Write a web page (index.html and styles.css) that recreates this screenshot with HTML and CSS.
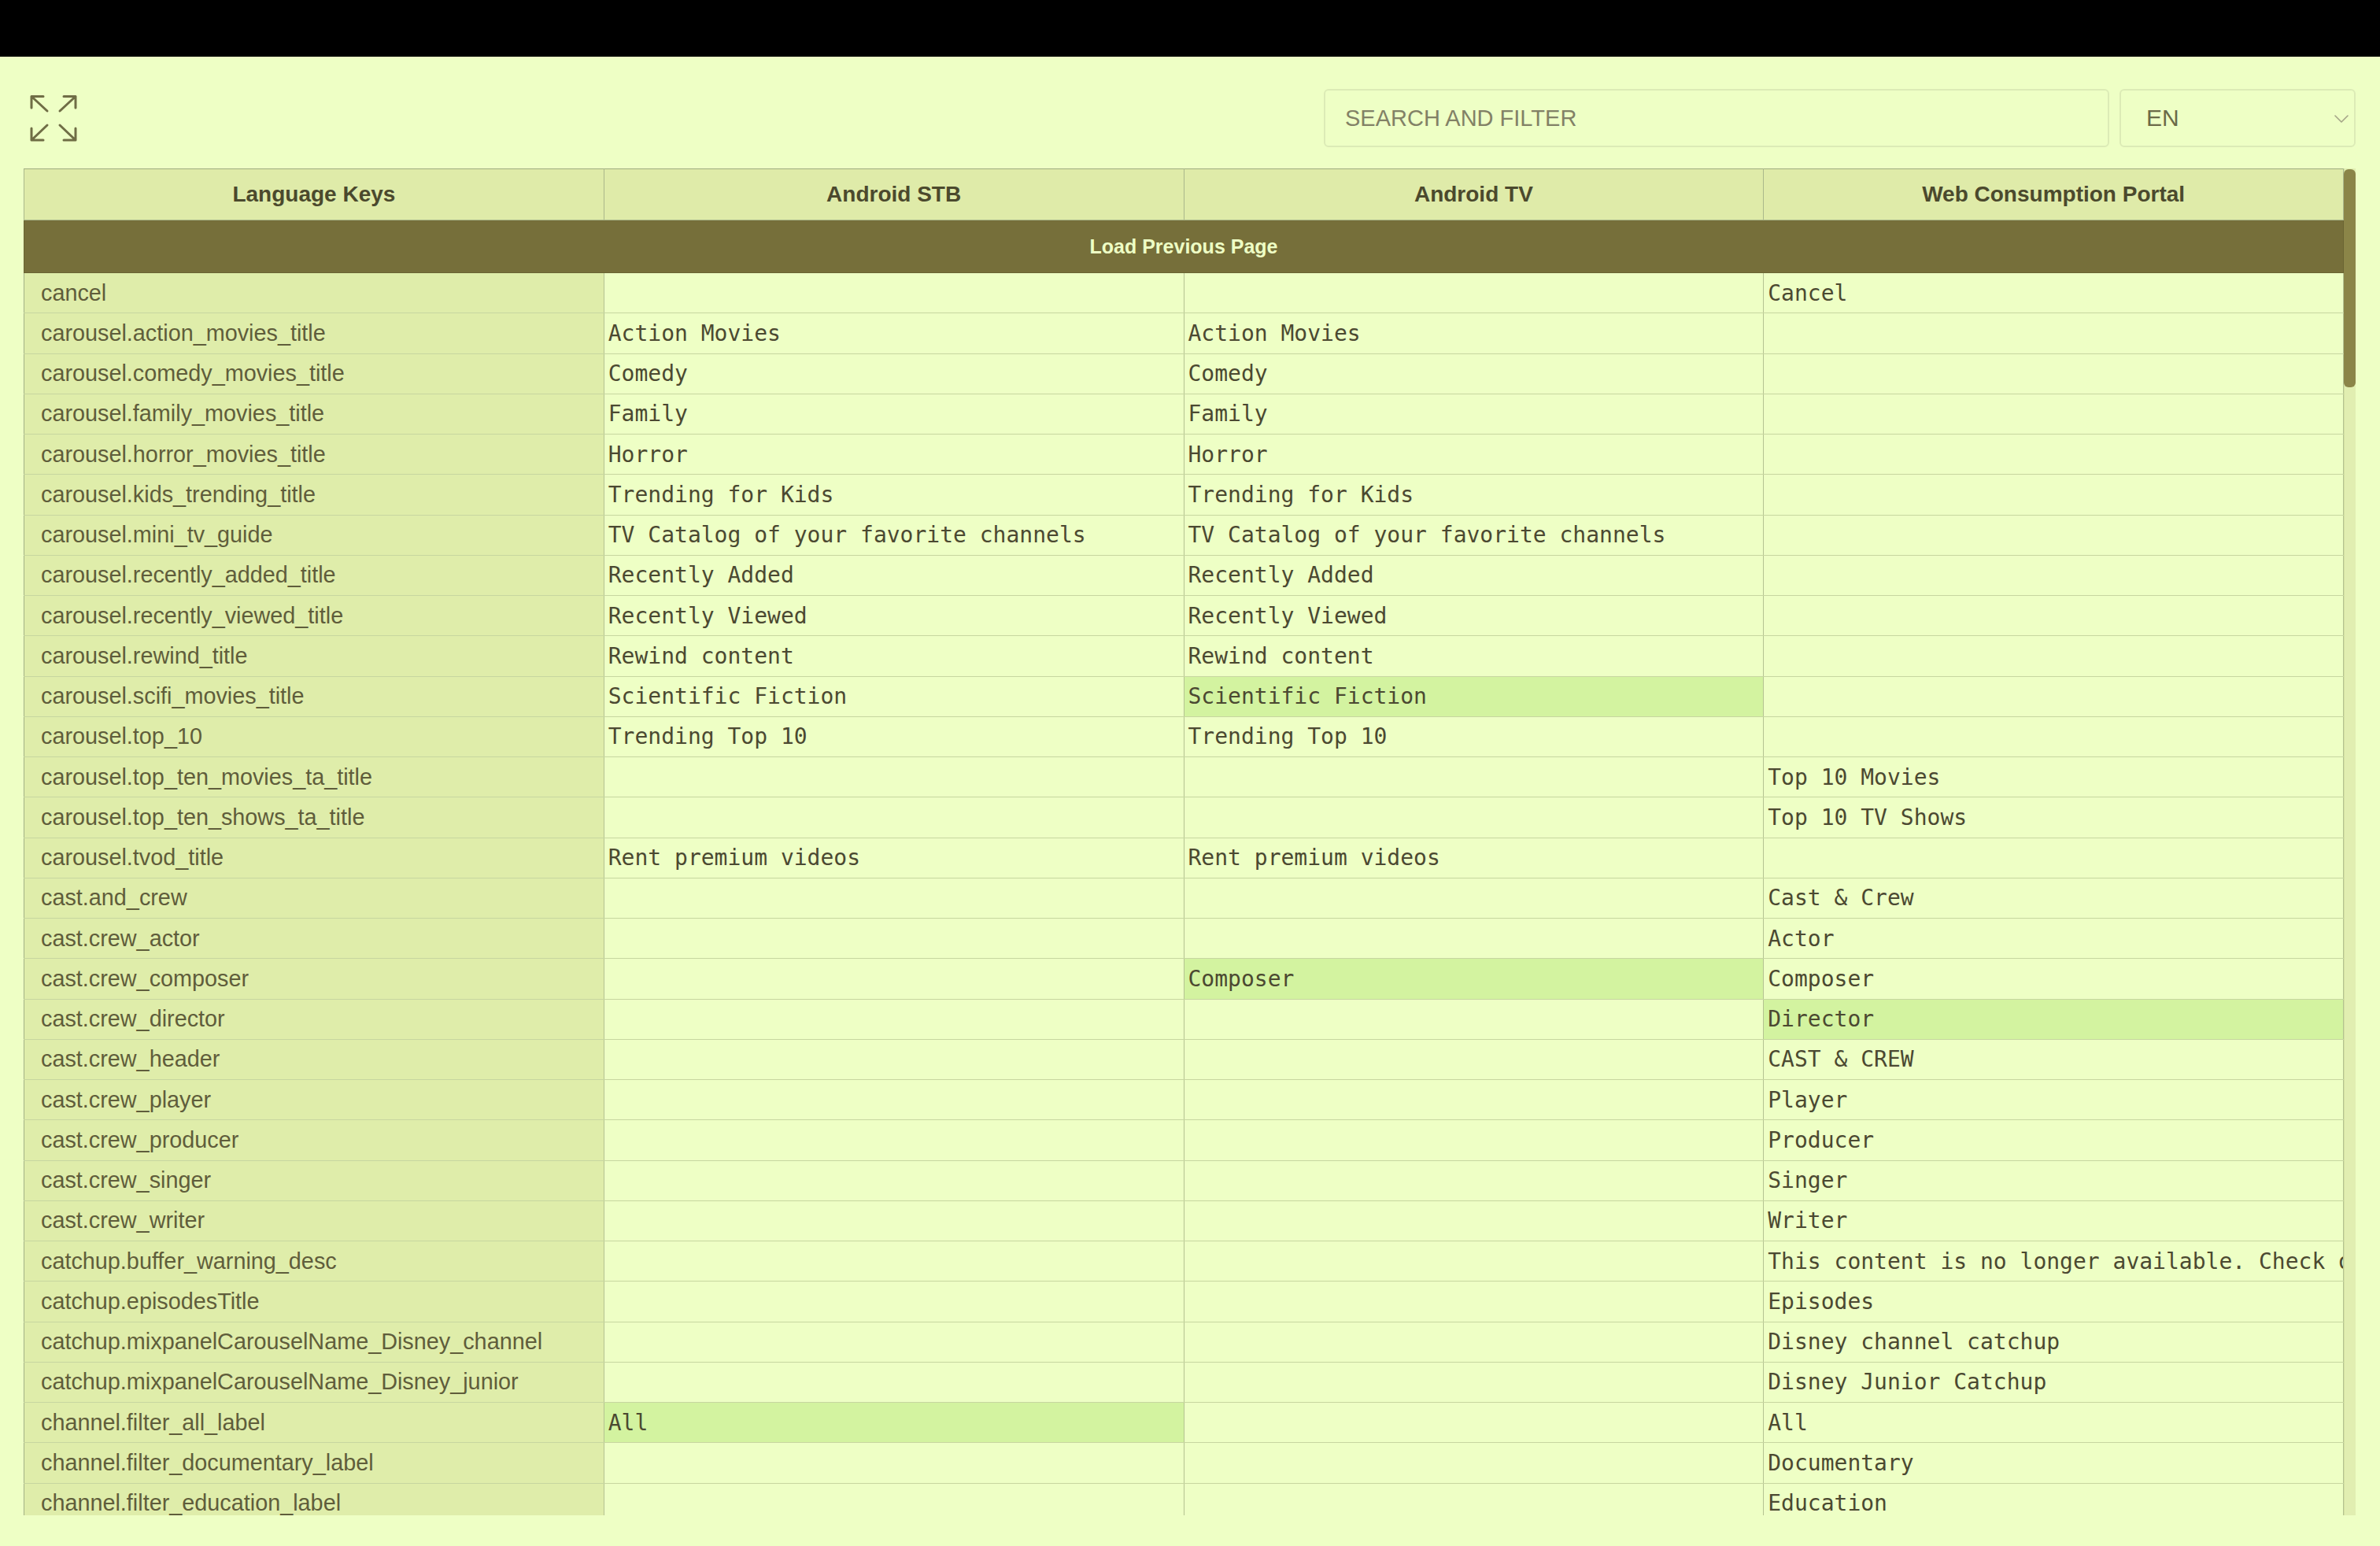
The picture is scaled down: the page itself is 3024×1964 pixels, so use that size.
FILE: index.html
```html
<!DOCTYPE html>
<html lang="en">
<head>
<meta charset="utf-8">
<title>Language Keys</title>
<link rel="stylesheet" href="styles.css">
</head>
<body>
<div class="topbar"></div>
<main class="main">
  <div class="toolbar">
    <button class="expand-btn" aria-label="Expand">
      <svg viewBox="0 0 64 64" width="64" height="64" fill="none" stroke="#6f6d45" stroke-width="3" stroke-linecap="round" stroke-linejoin="round">
        <path d="M4 19 V4.5 H19 M4 4.5 L24 23"/>
        <path d="M45 4.5 H60 V19 M60 4.5 L40 23"/>
        <path d="M4 45 V60 H19 M4 60 L24 41"/>
        <path d="M60 45 V60 H45 M60 60 L40 41"/>
      </svg>
    </button>
    <input class="search" type="text" placeholder="SEARCH AND FILTER">
    <div class="lang-select">
      <span class="lang-value">EN</span>
      <svg class="chevron" viewBox="0 0 18 10" width="18" height="10" fill="none" stroke="#a3a486" stroke-width="1.6" stroke-linecap="round" stroke-linejoin="round">
        <path d="M1 1 L9 9 L17 1"/>
      </svg>
    </div>
  </div>

  <div class="table-frame">
    <div class="table-scroll">
      <table class="grid">
        <thead>
          <tr>
            <th>Language Keys</th>
            <th>Android STB</th>
            <th>Android TV</th>
            <th>Web Consumption Portal</th>
          </tr>
        </thead>
        <tbody>
          <tr class="load-row"><td colspan="4">Load Previous Page</td></tr>
          <tr><td class="key">cancel</td><td></td><td></td><td>Cancel</td></tr>
          <tr><td class="key">carousel.action_movies_title</td><td>Action Movies</td><td>Action Movies</td><td></td></tr>
          <tr><td class="key">carousel.comedy_movies_title</td><td>Comedy</td><td>Comedy</td><td></td></tr>
          <tr><td class="key">carousel.family_movies_title</td><td>Family</td><td>Family</td><td></td></tr>
          <tr><td class="key">carousel.horror_movies_title</td><td>Horror</td><td>Horror</td><td></td></tr>
          <tr><td class="key">carousel.kids_trending_title</td><td>Trending for Kids</td><td>Trending for Kids</td><td></td></tr>
          <tr><td class="key">carousel.mini_tv_guide</td><td>TV Catalog of your favorite channels</td><td>TV Catalog of your favorite channels</td><td></td></tr>
          <tr><td class="key">carousel.recently_added_title</td><td>Recently Added</td><td>Recently Added</td><td></td></tr>
          <tr><td class="key">carousel.recently_viewed_title</td><td>Recently Viewed</td><td>Recently Viewed</td><td></td></tr>
          <tr><td class="key">carousel.rewind_title</td><td>Rewind content</td><td>Rewind content</td><td></td></tr>
          <tr><td class="key">carousel.scifi_movies_title</td><td>Scientific Fiction</td><td class="hl">Scientific Fiction</td><td></td></tr>
          <tr><td class="key">carousel.top_10</td><td>Trending Top 10</td><td>Trending Top 10</td><td></td></tr>
          <tr><td class="key">carousel.top_ten_movies_ta_title</td><td></td><td></td><td>Top 10 Movies</td></tr>
          <tr><td class="key">carousel.top_ten_shows_ta_title</td><td></td><td></td><td>Top 10 TV Shows</td></tr>
          <tr><td class="key">carousel.tvod_title</td><td>Rent premium videos</td><td>Rent premium videos</td><td></td></tr>
          <tr><td class="key">cast.and_crew</td><td></td><td></td><td>Cast &amp; Crew</td></tr>
          <tr><td class="key">cast.crew_actor</td><td></td><td></td><td>Actor</td></tr>
          <tr><td class="key">cast.crew_composer</td><td></td><td class="hl">Composer</td><td>Composer</td></tr>
          <tr><td class="key">cast.crew_director</td><td></td><td></td><td class="hl">Director</td></tr>
          <tr><td class="key">cast.crew_header</td><td></td><td></td><td>CAST &amp; CREW</td></tr>
          <tr><td class="key">cast.crew_player</td><td></td><td></td><td>Player</td></tr>
          <tr><td class="key">cast.crew_producer</td><td></td><td></td><td>Producer</td></tr>
          <tr><td class="key">cast.crew_singer</td><td></td><td></td><td>Singer</td></tr>
          <tr><td class="key">cast.crew_writer</td><td></td><td></td><td>Writer</td></tr>
          <tr><td class="key">catchup.buffer_warning_desc</td><td></td><td></td><td>This content is no longer available. Check our catalog</td></tr>
          <tr><td class="key">catchup.episodesTitle</td><td></td><td></td><td>Episodes</td></tr>
          <tr><td class="key">catchup.mixpanelCarouselName_Disney_channel</td><td></td><td></td><td>Disney channel catchup</td></tr>
          <tr><td class="key">catchup.mixpanelCarouselName_Disney_junior</td><td></td><td></td><td>Disney Junior Catchup</td></tr>
          <tr><td class="key">channel.filter_all_label</td><td class="hl">All</td><td></td><td>All</td></tr>
          <tr><td class="key">channel.filter_documentary_label</td><td></td><td></td><td>Documentary</td></tr>
          <tr><td class="key">channel.filter_education_label</td><td></td><td></td><td>Education</td></tr>
        </tbody>
      </table>
    </div>
    <div class="scrollbar" aria-hidden="true">
      <div class="scrollbar-thumb"></div>
    </div>
  </div>
</main>
</body>
</html>
```

FILE: styles.css
```css
* {
  box-sizing: border-box;
}

html,
body {
  margin: 0;
  height: 100%;
}

body {
  background: #eeffc5;
  font-family: "Liberation Sans", Arial, sans-serif;
  overflow: hidden;
}

.topbar {
  height: 72px;
  background: #000;
}

.main {
  padding: 0 31px 0 30px;
}

.toolbar {
  display: flex;
  align-items: center;
  padding: 41px 0 27px;
}

.expand-btn {
  width: 64px;
  height: 64px;
  margin-left: 6px;
  padding: 0;
  border: 0;
  background: none;
  display: block;
}

.expand-btn svg {
  display: block;
}

.search {
  margin-left: auto;
  width: 998px;
  height: 74px;
  border: 2px solid #dcebb6;
  border-radius: 6px;
  background: #eeffc5;
  padding: 0 25px;
  font: 29px "Liberation Sans", Arial, sans-serif;
  color: #6b6a48;
  outline: none;
}

.search::placeholder {
  color: #828166;
}

.lang-select {
  margin-left: 13px;
  width: 300px;
  height: 74px;
  border: 2px solid #dcebb6;
  border-radius: 6px;
  display: flex;
  align-items: center;
  padding: 0 7px 0 32px;
}

.lang-value {
  font-size: 30px;
  color: #6b6a48;
}

.chevron {
  margin-left: auto;
  margin-top: 2px;
}

.table-frame {
  display: flex;
  height: 1711px;
}

.table-scroll {
  flex: 1;
  min-width: 0;
  overflow: hidden;
}

.scrollbar {
  width: 15px;
  flex: none;
  background: #e1eeb1;
  border-left: 1px solid #d3e1a2;
}

.scrollbar-thumb {
  height: 277px;
  margin-top: 1px;
  margin-left: -1px;
  background: #8b8548;
  border-radius: 6px;
}

.grid {
  width: 100%;
  table-layout: fixed;
  border-collapse: collapse;
}

.grid th {
  height: 65px;
  background: #dfeba9;
  color: #4b492d;
  font-size: 28px;
  font-weight: bold;
  text-align: center;
  border: 1px solid #aab78b;
  border-top-color: #9fac80;
}

.grid td {
  height: 51.25px;
  padding: 0 0 0 5px;
  border: 1px solid #c7d6a0;
  border-left-color: #b4c291;
  border-right-color: #b4c291;
  font-family: "DejaVu Sans Mono", "Liberation Mono", monospace;
  font-size: 28px;
  color: #4b4931;
  white-space: nowrap;
  overflow: hidden;
  vertical-align: middle;
}

.grid td.key {
  background: #dfedaa;
  padding-left: 21px;
  font-family: "Liberation Sans", Arial, sans-serif;
  font-size: 28.8px;
  color: #5f5d3b;
  border-left-color: #a3b085;
}

.grid td.hl {
  background: #d3f3a0;
}

.grid .load-row td {
  height: 67px;
  background: #766f3a;
  color: #eeffc5;
  font-family: "Liberation Sans", Arial, sans-serif;
  font-size: 25px;
  font-weight: bold;
  text-align: center;
  padding: 0;
  border-color: #6a6433;
}
```
